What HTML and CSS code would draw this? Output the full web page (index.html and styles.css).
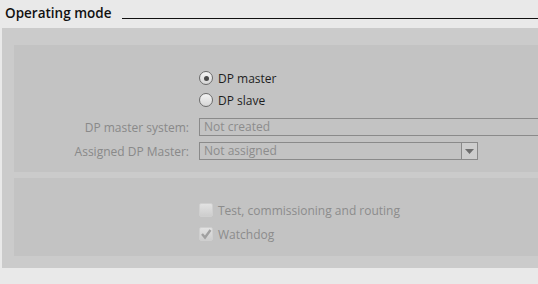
FILE: index.html
```html
<!DOCTYPE html>
<html lang="en">
<head>
    <meta charset="UTF-8">
    <title>Operating mode</title>
    <link rel="stylesheet" href="styles.css">
</head>
<body>
    <div class="header">
        <h2 class="title">Operating mode</h2>
        <div class="rule"></div>
    </div>

    <div class="panel">
        <div class="section mode">
            <div class="row">
                <span class="label"></span>
                <label class="radio"><span class="dot on"></span>DP master</label>
            </div>
            <div class="row">
                <span class="label"></span>
                <label class="radio"><span class="dot"></span>DP slave</label>
            </div>
            <div class="row field-row first-field">
                <span class="label">DP master system:</span>
                <div class="input wide">Not created</div>
            </div>
            <div class="row field-row">
                <span class="label">Assigned DP Master:</span>
                <div class="input select">
                    <span class="value">Not assigned</span>
                    <span class="drop">
                        <svg width="9" height="5" viewBox="0 0 9 5"><path d="M0 0h9L4.5 5z" fill="#6e6e6e"/></svg>
                    </span>
                </div>
            </div>
        </div>

        <div class="section options">
            <div class="row field-row">
                <span class="label"></span>
                <label class="check"><span class="box"></span>Test, commissioning and routing</label>
            </div>
            <div class="row field-row">
                <span class="label"></span>
                <label class="check">
                    <span class="box">
                        <svg width="12" height="12" viewBox="0 0 12 12"><path d="M2 6l3 3.5L10.5 2" fill="none" stroke="#a0a0a0" stroke-width="2.4"/></svg>
                    </span>Watchdog
                </label>
            </div>
        </div>
    </div>
</body>
</html>
```

FILE: styles.css
```css
* {
    padding: 0;
    margin: 0;
    box-sizing: border-box;
}
body {
    background-color: #e9e9e9;
    font-family: "Open Sans", "Noto Sans", sans-serif;
    font-size: 12px;
    color: #1e1e1e;
}
.header {
    display: flex;
    align-items: flex-end;
    height: 28px;
    padding: 0 0 7px 5px;
}
.title {
    font-size: 13.5px;
    font-weight: 600;
    line-height: 16px;
    color: #111;
}
.rule {
    flex: 1;
    height: 1px;
    margin-left: 11px;
    margin-bottom: 2px;
    background-color: #111;
}
.panel {
    margin-left: 2px;
    padding: 17px 0 12px 12px;
    background-color: #cbcbcb;
}
.section {
    background-color: #c3c3c3;
}
.mode {
    height: 127px;
    padding-top: 22px;
}
.options {
    height: 78px;
    margin-top: 6px;
    padding-top: 20px;
}
.row {
    display: flex;
    align-items: center;
    height: 22px;
}
.field-row {
    height: 24px;
}
.first-field {
    margin-top: 4px;
}
.label {
    width: 175px;
    text-align: right;
    color: #898989;
    flex-shrink: 0;
}
.radio, .check {
    display: flex;
    align-items: center;
    margin-left: 10px;
}
.check {
    color: #8c8c8c;
}
.dot {
    width: 14px;
    height: 14px;
    margin-right: 5px;
    border: 1px solid #6b6b6b;
    border-radius: 50%;
    background: linear-gradient(#f4f4f4, #d6d6d6);
    display: flex;
    align-items: center;
    justify-content: center;
}
.dot.on::after {
    content: "";
    width: 5px;
    height: 5px;
    border-radius: 50%;
    background-color: #4a4a4a;
}
.box {
    width: 14px;
    height: 14px;
    margin-right: 5px;
    border: 1px solid #cfcfcf;
    border-radius: 2px;
    background: linear-gradient(#e2e2e2, #cdcdcd);
    display: flex;
    align-items: center;
    justify-content: center;
}
.input {
    height: 18px;
    margin-left: 10px;
    border: 1px solid #8a8a8a;
    color: #8c8c8c;
    padding-left: 4px;
    line-height: 16px;
}
.wide {
    flex: 1;
    border-right: none;
}
.select {
    width: 279px;
    display: flex;
    padding-right: 0;
}
.value {
    flex: 1;
}
.drop {
    width: 16px;
    border-left: 1px solid #8a8a8a;
    background-color: #cdcdcd;
    display: flex;
    align-items: center;
    justify-content: center;
}
```
